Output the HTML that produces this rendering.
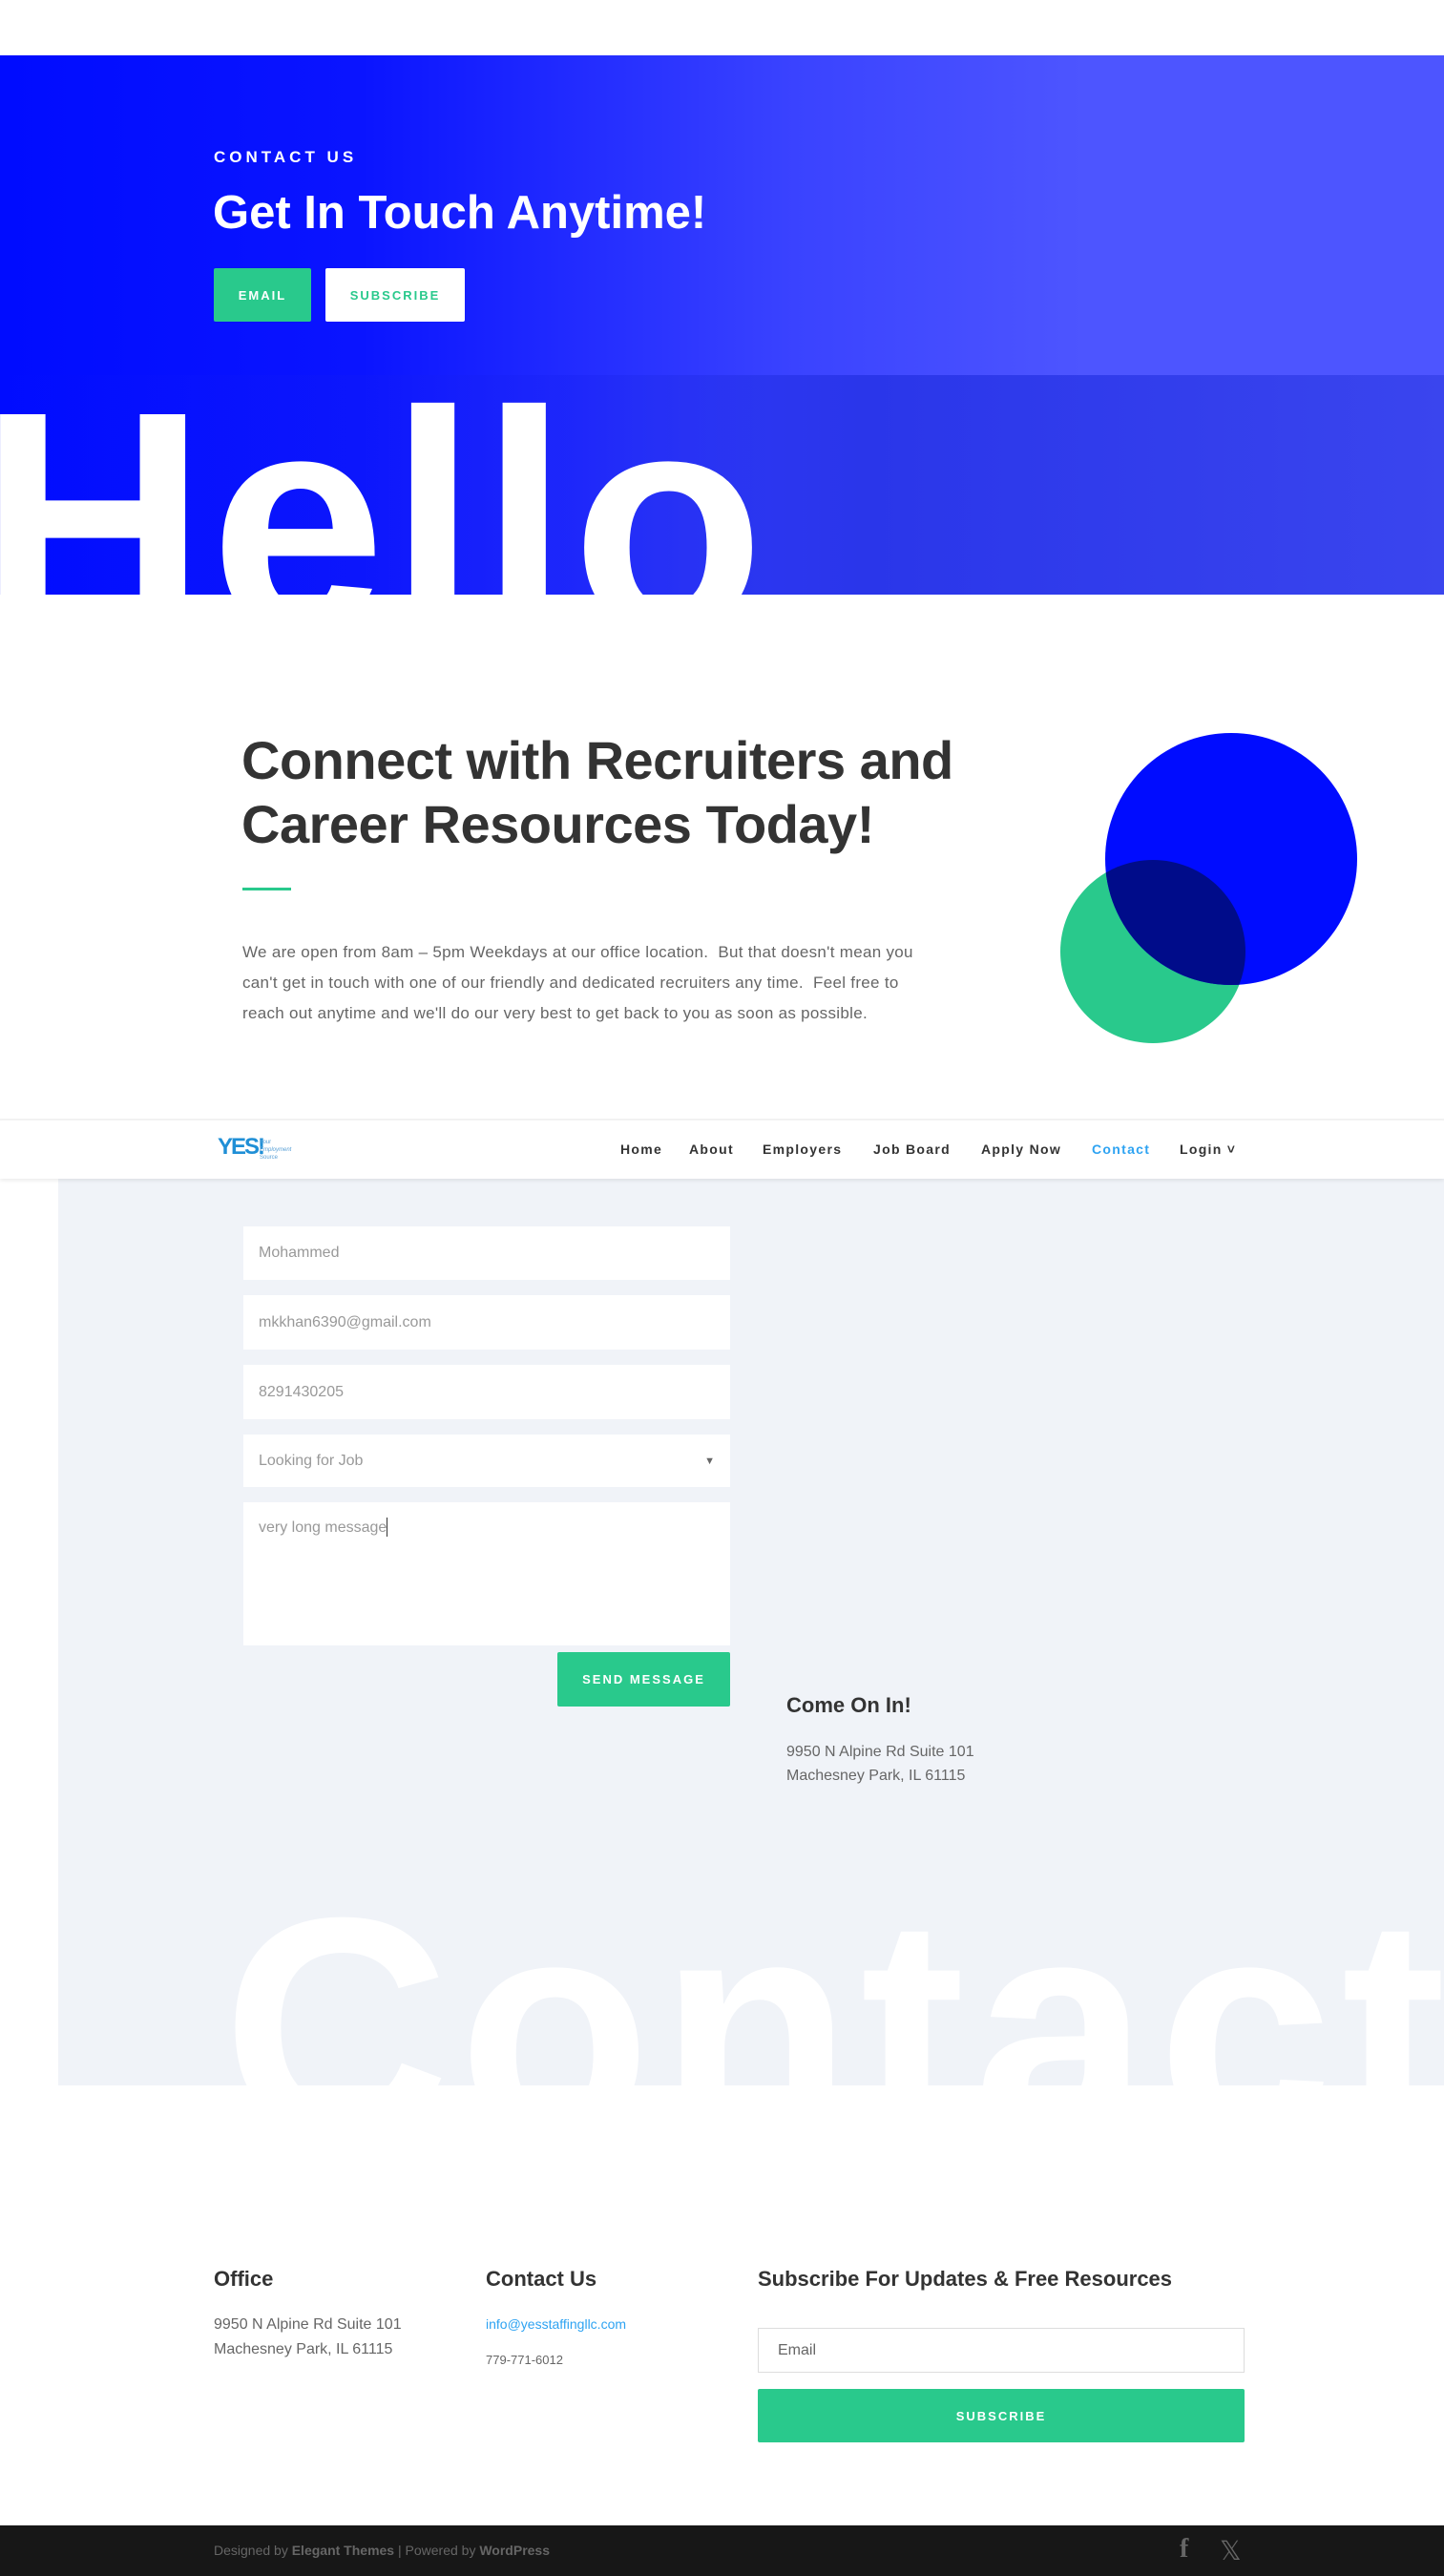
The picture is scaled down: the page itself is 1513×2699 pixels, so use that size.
<!DOCTYPE html>
<html><head><meta charset="utf-8">
<style>
*{margin:0;padding:0;box-sizing:border-box}
body{width:1513px;height:2699px;position:relative;overflow:hidden;background:#fff;font-family:"Liberation Sans",sans-serif}
.abs{position:absolute}
.hero{left:0;top:58px;width:1513px;height:565px;overflow:hidden;background:linear-gradient(90deg,#000cff 0%,#0a14ff 25%,#3a43ff 55%,#4d55ff 75%,#4d55ff 100%)}
.band{left:0;top:335px;width:1513px;height:230px;background:linear-gradient(90deg,rgba(0,12,255,0) 0%,rgba(20,30,240,0.3) 40%,#2a36ea 60%,#3a45ee 100%)}
.hello{left:-22px;top:324px;font-size:330px;font-weight:bold;color:#fff;letter-spacing:4px;line-height:1;white-space:nowrap}
.btn{height:56px;font-size:13px;font-weight:bold;letter-spacing:2px;display:flex;align-items:center;justify-content:center;border-radius:2px}
.nav a{position:absolute;top:1196px;font-size:14px;font-weight:bold;color:#333;letter-spacing:1.3px}
.field{left:255px;width:510px;background:#fff;color:#999;font-size:16px;padding:0 16px;display:flex;align-items:center}
.contact{font-size:330px;font-weight:bold;color:#fff;letter-spacing:9px;line-height:1;white-space:nowrap}
</style></head><body>

<div class="abs hero">
  <div class="abs band"></div>
  <div class="abs hello">Hello</div>
</div>
<div class="abs" style="left:224px;top:155px;color:#fff;font-size:17px;font-weight:bold;letter-spacing:4px">CONTACT US</div>
<div class="abs" style="left:223px;top:195px;color:#fff;font-size:49px;font-weight:bold;letter-spacing:0px">Get In Touch Anytime!</div>
<div class="abs btn" style="left:224px;top:281px;width:102px;background:#29c98c;color:#fff">EMAIL</div>
<div class="abs btn" style="left:341px;top:281px;width:146px;background:#fff;color:#29c98c">SUBSCRIBE</div>

<div class="abs" style="left:253px;top:763px;color:#333;font-size:56px;font-weight:bold;line-height:67px;letter-spacing:-0.5px">Connect with Recruiters and<br>Career Resources Today!</div>
<div class="abs" style="left:254px;top:930px;width:51px;height:3px;background:#29c98c"></div>
<div class="abs" style="left:254px;top:982px;width:800px;color:#666;font-size:17px;letter-spacing:0.3px;line-height:32px;white-space:nowrap">We are open from 8am – 5pm Weekdays at our office location.&nbsp; But that doesn't mean you<br>can't get in touch with one of our friendly and dedicated recruiters any time.&nbsp; Feel free to<br>reach out anytime and we'll do our very best to get back to you as soon as possible.</div>
<svg class="abs" style="left:1100px;top:760px" width="340" height="345">
<defs><clipPath id="cb"><ellipse cx="190" cy="140" rx="132" ry="132"/></clipPath></defs>
<ellipse cx="108" cy="237" rx="97" ry="96" fill="#29c98c"/>
<ellipse cx="190" cy="140" rx="132" ry="132" fill="#000cff"/>
<ellipse cx="108" cy="237" rx="97" ry="96" fill="#000c8a" clip-path="url(#cb)"/>
</svg>

<div class="abs" style="left:0;top:1172px;width:1513px;height:2px;background:#f3f3f3"></div>
<div class="abs" style="left:0;top:1174px;width:1513px;height:61px;background:#fff;box-shadow:0 2px 4px rgba(0,0,0,0.08);z-index:2"></div>
<div class="abs" style="left:61px;top:1235px;width:1452px;height:950px;background:#f0f3f8;overflow:hidden">
  <div class="abs contact" style="left:172px;top:725px">Contact</div>
</div>
<div class="abs" style="left:228px;top:1188px;z-index:3;font-size:24px;font-weight:bold;color:#1f8fd6;letter-spacing:-2px">YES!</div>
<div class="abs" style="left:272px;top:1193px;z-index:3;font-size:6px;line-height:8px;color:#5aa0d6">Your<br><i>Employment</i><br>Source</div>
<div class="nav" style="z-index:3;position:relative">
<a style="left:650px">Home</a><a style="left:722px">About</a><a style="left:799px">Employers</a><a style="left:915px">Job Board</a><a style="left:1028px">Apply Now</a><a style="left:1144px;color:#2ea3f2">Contact</a><a style="left:1236px">Login ˅</a>
</div>

<div class="abs field" style="top:1285px;height:56px">Mohammed</div>
<div class="abs field" style="top:1357px;height:57px">mkkhan6390@gmail.com</div>
<div class="abs field" style="top:1430px;height:57px">8291430205</div>
<div class="abs field" style="top:1503px;height:55px">Looking for Job<span style="margin-left:auto;font-size:11px;color:#666">▼</span></div>
<div class="abs field" style="top:1574px;height:150px;align-items:flex-start;padding-top:18px">very long message<span style="border-left:1px solid #333;height:20px;margin-top:-2px"></span></div>
<div class="abs btn" style="left:584px;top:1731px;width:181px;height:57px;background:#29c98c;color:#fff">SEND MESSAGE</div>
<div class="abs" style="left:824px;top:1774px;font-size:22px;font-weight:bold;color:#333">Come On In!</div>
<div class="abs" style="left:824px;top:1823px;font-size:16px;line-height:25px;color:#666">9950 N Alpine Rd Suite 101<br>Machesney Park, IL 61115</div>

<div class="abs" style="left:224px;top:2375px;font-size:22px;font-weight:bold;color:#333">Office</div>
<div class="abs" style="left:509px;top:2375px;font-size:22px;font-weight:bold;color:#333">Contact Us</div>
<div class="abs" style="left:794px;top:2375px;font-size:22px;font-weight:bold;color:#333">Subscribe For Updates &amp; Free Resources</div>
<div class="abs" style="left:224px;top:2423px;font-size:16px;line-height:26px;color:#666">9950 N Alpine Rd Suite 101<br>Machesney Park, IL 61115</div>
<div class="abs" style="left:509px;top:2427px;font-size:14px;color:#2ea3f2">info@yesstaffingllc.com</div>
<div class="abs" style="left:509px;top:2465px;font-size:13px;color:#666">779-771-6012</div>
<div class="abs" style="left:794px;top:2439px;width:510px;height:47px;border:1px solid #ddd;font-size:16px;color:#666;padding:0 20px;display:flex;align-items:center">Email</div>
<div class="abs btn" style="left:794px;top:2503px;width:510px;height:56px;background:#29c98c;color:#fff">SUBSCRIBE</div>

<div class="abs" style="left:0;top:2646px;width:1513px;height:53px;background:#171717"></div>
<div class="abs" style="left:224px;top:2664px;font-size:14px;color:#666">Designed by <b>Elegant Themes</b> | Powered by <b>WordPress</b></div>
<div class="abs" style="left:1236px;top:2655px;font-size:28px;font-weight:bold;color:#666;font-family:'Liberation Serif',serif">f</div>
<div class="abs" style="left:1278px;top:2656px;font-size:28px;color:#666">𝕏</div>
</body></html>
